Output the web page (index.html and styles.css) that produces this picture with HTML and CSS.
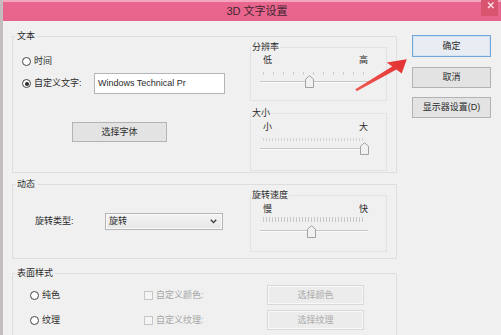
FILE: index.html
```html
<!DOCTYPE html>
<html lang="zh-CN">
<head>
<meta charset="utf-8">
<title>3D 文字设置</title>
<link rel="stylesheet" href="styles.css">
</head>
<body>
<div class="window">
  <header class="titlebar">
    <div class="title">3D 文字设置</div>
    <div class="close"><svg width="17" height="16" viewBox="0 0 17 16"><path d="M7 2.5 L12.5 8 M12.5 2.5 L7 8" stroke="#fbe3ea" stroke-width="1.4" fill="none"/></svg></div>
  </header>
  <div class="client">
    <div class="groups">
      <fieldset class="group g1">
        <legend>文本</legend>
        <div class="g-body g1-body">
          <div class="g1-left">
            <div class="opt opt-time"><span class="radio"></span><span>时间</span></div>
            <div class="opt opt-custom"><span class="radio on"></span><span class="custom-lbl">自定义文字:</span><div class="textbox">Windows Technical Pr</div></div>
            <div class="btn btn-font">选择字体</div>
          </div>
          <div class="g-right">
            <fieldset class="sub sub-res">
              <legend>分辨率</legend>
              <div class="sub-body res-body">
                <div class="ends"><span>低</span><span>高</span></div>
                <div class="slider slider-res">
                  <div class="ticks ticks-sparse"></div>
                  <div class="track"></div>
                  <svg class="thumb" style="left:45.4%" width="9" height="13" viewBox="0 0 9 13"><path d="M0.5 12.5 V4.2 L4.5 0.7 L8.5 4.2 V12.5 Z" fill="#f1f1f1" stroke="#a2a2a2"/></svg>
                </div>
              </div>
            </fieldset>
            <fieldset class="sub sub-size">
              <legend>大小</legend>
              <div class="sub-body size-body">
                <div class="ends"><span>小</span><span>大</span></div>
                <div class="slider slider-size">
                  <div class="ticks ticks-mid"></div>
                  <div class="track"></div>
                  <svg class="thumb" style="left:97%" width="9" height="13" viewBox="0 0 9 13"><path d="M0.5 12.5 V4.2 L4.5 0.7 L8.5 4.2 V12.5 Z" fill="#f1f1f1" stroke="#a2a2a2"/></svg>
                </div>
              </div>
            </fieldset>
          </div>
        </div>
      </fieldset>

      <fieldset class="group g2">
        <legend>动态</legend>
        <div class="g-body g2-body">
          <div class="g2-left">
            <div class="type-row">
              <span class="type-lbl">旋转类型:</span>
              <div class="combo"><span>旋转</span><svg width="7" height="5" viewBox="0 0 7 5"><path d="M0.8 0.8 L3.5 3.6 L6.2 0.8" stroke="#333" stroke-width="1.3" fill="none"/></svg></div>
            </div>
          </div>
          <div class="g-right">
            <fieldset class="sub sub-speed">
              <legend>旋转速度</legend>
              <div class="sub-body speed-body">
                <div class="ends"><span>慢</span><span>快</span></div>
                <div class="slider slider-speed">
                  <div class="ticks ticks-dense"></div>
                  <div class="track"></div>
                  <svg class="thumb" style="left:48%" width="9" height="13" viewBox="0 0 9 13"><path d="M0.5 12.5 V4.2 L4.5 0.7 L8.5 4.2 V12.5 Z" fill="#f1f1f1" stroke="#a2a2a2"/></svg>
                </div>
              </div>
            </fieldset>
          </div>
        </div>
      </fieldset>

      <fieldset class="group g3">
        <legend>表面样式</legend>
        <div class="g-body g3-body">
          <div class="opt"><span class="radio"></span><span>纯色</span></div>
          <div class="opt dis"><span class="check"></span><span>自定义颜色:</span></div>
          <div class="btn btn-dis">选择颜色</div>
          <div class="opt"><span class="radio"></span><span>纹理</span></div>
          <div class="opt dis"><span class="check"></span><span>自定义纹理:</span></div>
          <div class="btn btn-dis">选择纹理</div>
        </div>
      </fieldset>
    </div>

    <div class="side">
      <div class="btn btn-ok">确定</div>
      <div class="btn btn-cancel">取消</div>
      <div class="btn btn-display">显示器设置(D)</div>
    </div>
  </div>
</div>
<svg class="arrow" width="501" height="335" viewBox="0 0 501 335">
  <defs>
    <linearGradient id="ar" x1="356" y1="90" x2="407" y2="59" gradientUnits="userSpaceOnUse">
      <stop offset="0" stop-color="#ee5a55"/>
      <stop offset="1" stop-color="#e2302f"/>
    </linearGradient>
  </defs>
  <path d="M355.3 89.2 L392.2 66.4 L386.7 62.5 L406.8 59.2 L401.7 73.6 L396.4 69.6 L356.7 91.2 Z" fill="url(#ar)"/>
</svg>
</body>
</html>
```

FILE: styles.css
```css
* { box-sizing: border-box; }
html, body { margin: 0; padding: 0; }
body {
  width: 501px;
  height: 335px;
  overflow: hidden;
  position: relative;
  background: #f0f0f0;
  font-family: "Liberation Sans", "Noto Sans CJK SC", sans-serif;
  font-size: 9px;
  line-height: 11px;
  color: #2b2b2b;
}

.window {
  height: 335px;
  border-left: 3px solid #c4bcbf;
  display: flex;
  flex-direction: column;
  overflow: hidden;
}

.titlebar {
  height: 21px;
  flex: none;
  background: linear-gradient(#f3a6bd 0, #f3a6bd 2px, #e9668f 2px, #e8648d 100%);
  display: grid;
  grid-template-columns: 1fr auto 1fr;
  align-items: center;
}
.title {
  grid-column: 2;
  font-size: 11px;
  line-height: 13px;
  color: #3e2630;
  padding-left: 10px;
  padding-top: 1px;
}
.close {
  grid-column: 3;
  justify-self: end;
  align-self: start;
  width: 17px;
  height: 16px;
  margin-right: 3px;
  background: #d9546e;
}
.close svg { display: block; }

.client {
  flex: 1;
  display: flex;
  padding-left: 9px;
  min-height: 0;
}

.groups {
  width: 385px;
  flex: none;
  padding-top: 10px;
}

.group {
  margin: 0;
  padding: 0;
  min-width: 0;
  border: 1px solid #dedede;
}
.group > legend {
  margin-left: 2px;
  padding: 0 2px;
  line-height: 11px;
  height: 11px;
}
.g2 { margin-top: 6px; }
.g3 { margin-top: 9px; border-bottom: none; }

.g-body { display: flex; }
.g1-body { height: 130px; }
.g2-body { height: 68px; }

.g1-left {
  width: 237px;
  flex: none;
  padding: 12px 0 0 9px;
  display: flex;
  flex-direction: column;
}
.g-right {
  width: 137px;
  flex: none;
}

.opt {
  display: flex;
  align-items: center;
  gap: 3px;
  white-space: nowrap;
}
.opt-time { height: 14px; }
.opt-custom { margin-top: 5px; height: 21px; gap: 2px; }
.custom-lbl { width: 59px; padding-left: 1px; }

.radio {
  width: 9px;
  height: 9px;
  border: 1px solid #444;
  border-radius: 50%;
  background: #fff;
  flex: none;
  display: flex;
  align-items: center;
  justify-content: center;
}
.radio.on::after {
  content: "";
  width: 4px;
  height: 4px;
  border-radius: 50%;
  background: #2a2a2a;
}
.check {
  width: 9px;
  height: 9px;
  border: 1px solid #c6c6c6;
  background: #f5f5f5;
  flex: none;
}
.dis { color: #a6a6a6; }

.textbox {
  width: 131px;
  height: 21px;
  border: 1px solid #b3b5ba;
  background: #fff;
  padding-left: 3px;
  display: flex;
  align-items: center;
  color: #2a2a2a;
}

.btn {
  display: flex;
  align-items: center;
  justify-content: center;
  background: #e3e3e3;
  border: 1px solid #b3b3b3;
  white-space: nowrap;
}
.btn-font {
  margin-top: 28px;
  margin-left: 50px;
  width: 95px;
  height: 20px;
}
.btn-dis {
  height: 20px;
  width: 97px;
  background: #ececec;
  border-color: #d8d8d8;
  box-shadow: inset 0 0 0 1px #f8f8f8;
  color: #ababab;
}

/* sub group boxes */
.sub {
  margin: 0;
  padding: 0;
  min-width: 0;
  border: 1px solid #e2e2e2;
}
.sub > legend {
  margin-left: 0;
  padding: 0 1px;
  line-height: 11px;
  height: 11px;
}
.sub-size { margin-top: 7px; }
.sub-body { padding: 0 17px 0 12px; }
.res-body { height: 47px; padding-top: 2px; }
.size-body { height: 51px; padding-top: 3px; }
.speed-body { height: 50px; padding-top: 3px; }

.ends {
  display: flex;
  justify-content: space-between;
  height: 11px;
  padding-right: 1px;
}

.slider {
  position: relative;
  width: 108px;
  margin-left: -3px;
}
.ticks { height: 3px; margin: 0 3px; }
.ticks-sparse {
  background: repeating-linear-gradient(to right, #cdcdcd 0, #cdcdcd 1px, transparent 1px, transparent 10px);
}
.ticks-mid {
  background: repeating-linear-gradient(to right, #d2d2d2 0, #d2d2d2 1px, transparent 1px, transparent 3px);
}
.ticks-dense {
  height: 5px;
  background: repeating-linear-gradient(to right, #c9c9c9 0, #c9c9c9 1px, transparent 1px, transparent 3px);
}
.track {
  height: 2px;
  border-top: 1px solid #c6c6c6;
  border-bottom: 1px solid #fbfbfb;
  background: #e6e6e6;
}
.thumb {
  position: absolute;
  display: block;
  margin-left: -4.5px;
}

.slider-res { margin-top: 6px; height: 17px; }
.slider-res .track { margin-top: 6px; }
.slider-res .thumb { top: 3px; }

.slider-size { margin-top: 5px; height: 17px; }
.slider-size .track { margin-top: 7px; }
.slider-size .thumb { top: 4px; }

.slider-speed { margin-top: 2px; height: 22px; }
.slider-speed .track { margin-top: 8px; }
.slider-speed .thumb { top: 8px; }

/* 动态 */
.g2-left {
  width: 237px;
  flex: none;
  padding: 23px 0 0 22px;
}
.type-row {
  display: flex;
  align-items: center;
  height: 17px;
}
.type-lbl { width: 70px; }
.combo {
  width: 118px;
  height: 17px;
  border: 1px solid #b6b6b6;
  background: linear-gradient(#f3f3f3, #e7e7e7);
  box-shadow: inset 0 0 0 1px #fafafa;
  display: flex;
  align-items: center;
  justify-content: space-between;
  padding: 0 5px 0 3px;
}
.combo svg { display: block; }

/* 表面样式 */
.g3-body {
  display: grid;
  grid-template-columns: 114px 123px 97px;
  grid-auto-rows: 20px;
  row-gap: 5px;
  padding: 6px 0 0 17px;
  height: 56px;
  align-items: center;
}

/* right buttons */
.side {
  width: 79px;
  flex: none;
  margin-left: 15px;
  padding-top: 14px;
  display: flex;
  flex-direction: column;
}
.btn-ok {
  height: 22px;
  border-color: #72a6d8;
  background: #e7edf3;
  box-shadow: inset 0 0 0 1px #d2e3f3;
}
.btn-cancel { height: 21px; margin-top: 10px; }
.btn-display { height: 21px; margin-top: 9px; }

.arrow {
  position: absolute;
  left: 0;
  top: 0;
  pointer-events: none;
}
```
